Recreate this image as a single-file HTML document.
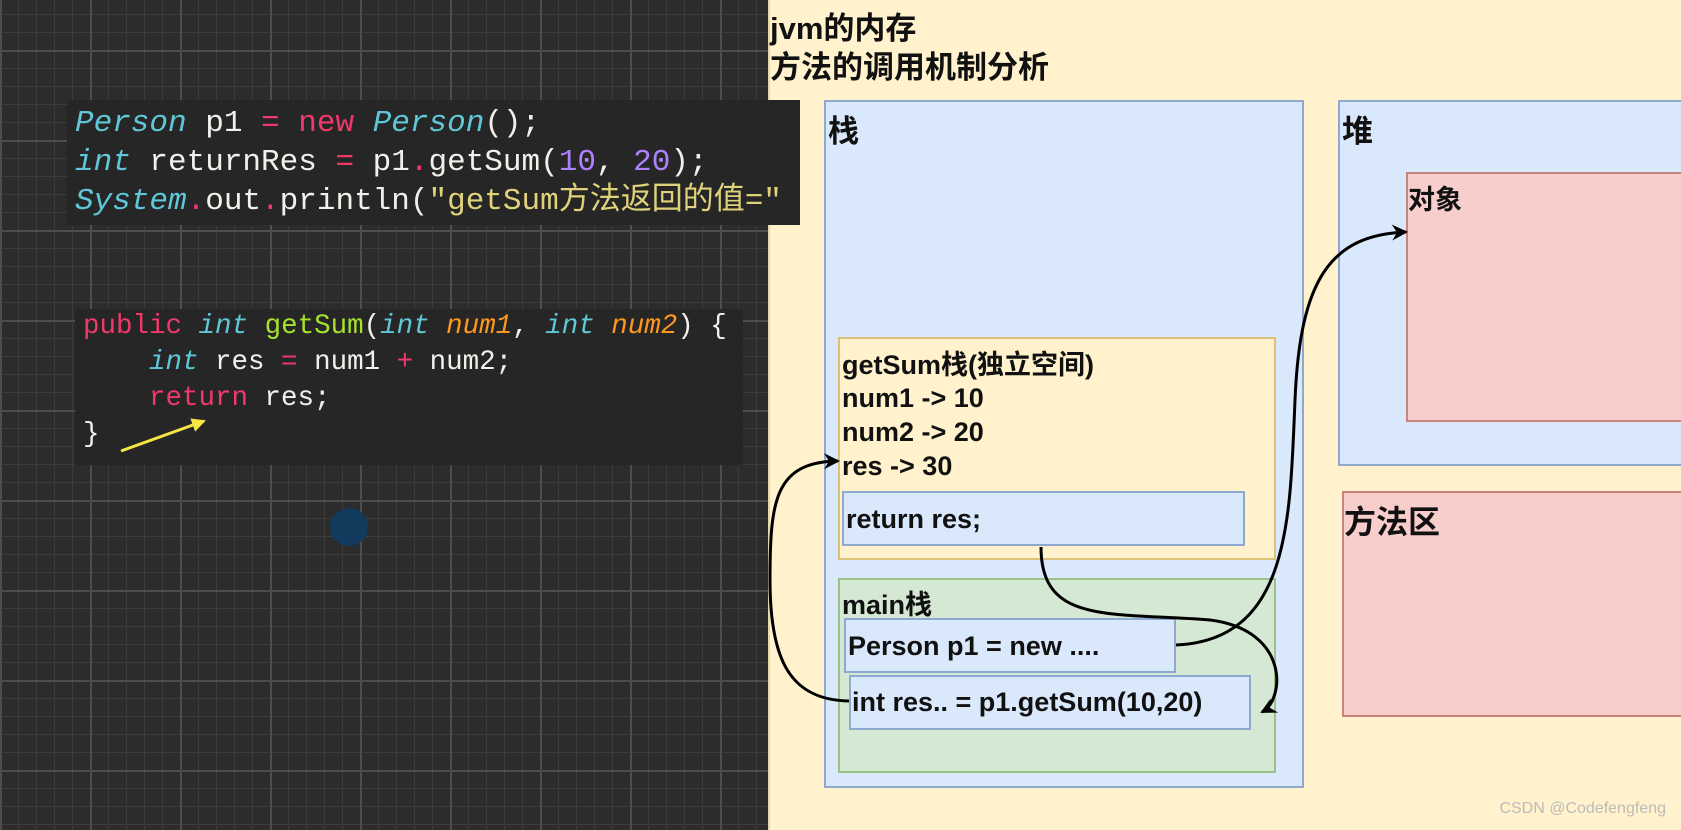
<!DOCTYPE html>
<html><head><meta charset="utf-8"><style>
*{margin:0;padding:0;box-sizing:border-box}
body{width:1681px;height:830px;overflow:hidden;position:relative;background:#2c2c2c;font-family:"Liberation Sans","Noto Sans CJK SC",sans-serif}
.grid{position:absolute;left:0;top:0;width:768px;height:830px;
background-image:
linear-gradient(#4e4e4e 2px,transparent 2px),
linear-gradient(90deg,#4e4e4e 2px,transparent 2px),
linear-gradient(#3c3c3c 1px,transparent 1px),
linear-gradient(90deg,#3c3c3c 1px,transparent 1px);
background-size:90px 90px,90px 90px,18px 18px,18px 18px;background-position:0 50px,0 0,0 50px,0 0}
.code{position:absolute;background:#262626;font-family:"Liberation Mono","Noto Sans CJK SC",monospace;color:#f1f1ec;white-space:pre;z-index:2}
.code div{position:absolute;left:8px;line-height:36px;height:36px}
.c{color:#5fc7d8;font-style:italic}.p{color:#f0386b}.n{color:#ae81ff}.s{color:#e0d27a}.g{color:#a6e22e}.o{color:#fd971f;font-style:italic}
.panel{position:absolute;left:768px;top:0;width:913px;height:830px;background:#fff2cc;border-left:2px solid #e8d9a8}
.b{position:absolute;border:2px solid}
.blue{background:#dae8fc;border-color:#8ea9cf}
.red{background:#f8cecc;border-color:#c9837f}
.yel{background:#fff2cc;border-color:#dcc178}
.grn{background:#d5e8d4;border-color:#9cc08a}
.t{position:absolute;font-weight:bold;color:#111;font-size:27px;white-space:nowrap;line-height:32px}
</style></head><body>
<div class="grid"></div>
<div style="position:absolute;left:330px;top:508px;width:38px;height:38px;border-radius:50%;background:#123a5c"></div>
<div class="panel"></div>
<div class="code" style="left:67px;top:100px;width:733px;height:125px;font-size:31px">
<div style="top:6px"><span class="c">Person</span> p1 <span class="p">=</span> <span class="p">new</span> <span class="c">Person</span>();</div>
<div style="top:45px"><span class="c">int</span> returnRes <span class="p">=</span> p1<span class="p">.</span>getSum(<span class="n">10</span>, <span class="n">20</span>);</div>
<div style="top:84px"><span class="c">System</span><span class="p">.</span>out<span class="p">.</span>println(<span class="s">"getSum方法返回的值="</span></div>
</div>
<div class="code" style="left:75px;top:309px;width:668px;height:156px;font-size:27.5px">
<div style="top:0px"><span class="p">public</span> <span class="c">int</span> <span class="g">getSum</span>(<span class="c">int</span> <span class="o">num1</span>, <span class="c">int</span> <span class="o">num2</span>) {</div>
<div style="top:36px">    <span class="c">int</span> res <span class="p">=</span> num1 <span class="p">+</span> num2;</div>
<div style="top:72px">    <span class="p">return</span> res;</div>
<div style="top:108px">}</div>
</div>
<div class="t" style="left:770px;top:10px;font-size:31px;line-height:38px">jvm的内存</div>
<div class="t" style="left:770px;top:49px;font-size:31px;line-height:38px">方法的调用机制分析</div>
<div class="b blue" style="left:824px;top:100px;width:480px;height:688px"></div>
<div class="t" style="left:828px;top:113px;font-size:31px;line-height:38px">栈</div>
<div class="b blue" style="left:1338px;top:100px;width:350px;height:366px"></div>
<div class="t" style="left:1342px;top:113px;font-size:31px;line-height:38px">堆</div>
<div class="b red" style="left:1406px;top:172px;width:280px;height:250px"></div>
<div class="t" style="left:1408px;top:184px">对象</div>
<div class="b red" style="left:1342px;top:491px;width:345px;height:226px"></div>
<div class="t" style="left:1344px;top:503px;font-size:32px;line-height:38px">方法区</div>
<div class="b yel" style="left:838px;top:337px;width:438px;height:223px"></div>
<div class="t" style="left:842px;top:349px">getSum栈(独立空间)</div>
<div class="t" style="left:842px;top:382px">num1 -&gt; 10</div>
<div class="t" style="left:842px;top:416px">num2 -&gt; 20</div>
<div class="t" style="left:842px;top:450px">res -&gt; 30</div>
<div class="b blue" style="left:842px;top:491px;width:403px;height:55px"></div>
<div class="t" style="left:846px;top:503px">return res;</div>
<div class="b grn" style="left:838px;top:578px;width:438px;height:195px"></div>
<div class="t" style="left:842px;top:589px">main栈</div>
<div class="b blue" style="left:844px;top:618px;width:332px;height:55px"></div>
<div class="t" style="left:848px;top:630px">Person p1 = new ....</div>
<div class="b blue" style="left:849px;top:675px;width:402px;height:55px"></div>
<div class="t" style="left:852px;top:686px">int res.. = p1.getSum(10,20)</div>
<svg style="position:absolute;left:0;top:0;z-index:3" width="1681" height="830">
<defs><marker id="a" markerWidth="16" markerHeight="16" refX="14" refY="8" orient="auto" markerUnits="userSpaceOnUse"><path d="M0,0 L16,8 L0,16 L5,8z" fill="#000"/></marker>
<marker id="y" markerWidth="14" markerHeight="14" refX="12" refY="7" orient="auto" markerUnits="userSpaceOnUse"><path d="M0,0 L14,7 L0,14z" fill="#f5e642"/></marker></defs>
<path d="M121 451 L204 421" stroke="#f5e642" stroke-width="3" fill="none" marker-end="url(#y)"/>
<g stroke="#000" stroke-width="3" fill="none">
<path d="M849 701 C790 700, 770 660, 770 580 C770 500, 775 462, 838 461" marker-end="url(#a)"/>
<path d="M1041 547 C1041 625, 1110 612, 1210 620 C1290 630, 1285 700, 1262 712" marker-end="url(#a)"/>
<path d="M1176 645 C1290 640, 1290 520, 1295 400 C1300 280, 1330 235, 1406 232" marker-end="url(#a)"/>
</g></svg>
<div style="position:absolute;right:15px;top:800px;font-size:16px;color:#bbb;font-family:'Liberation Sans',sans-serif">CSDN @Codefengfeng</div>
</body></html>
